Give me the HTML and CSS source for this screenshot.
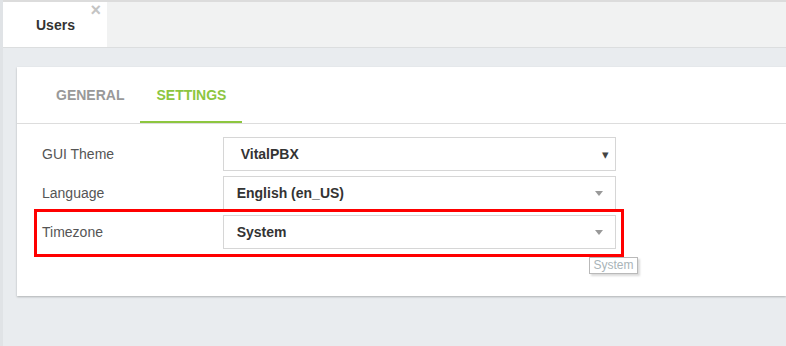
FILE: index.html
```html
<!DOCTYPE html>
<html>
<head>
  <title>Users</title>
  <link rel="stylesheet" href="styles.css">
</head>
<body>
  <div class="page">
    <header class="tab-bar">
      <div class="page-tab">
        <span class="page-tab-title">Users</span>
        <span class="page-tab-close">&times;</span>
      </div>
    </header>

    <main class="content">
      <section class="card">
        <nav class="card-tabs">
          <a class="card-tab">General</a>
          <a class="card-tab active">Settings</a>
        </nav>

        <form class="settings-form">
          <div class="form-row">
            <label class="form-label">GUI Theme</label>
            <div class="select native">
              <span class="select-value">VitalPBX</span>
              <span class="select-caret-dark">&#9662;</span>
            </div>
          </div>
          <div class="form-row">
            <label class="form-label">Language</label>
            <div class="select">
              <span class="select-value">English (en_US)</span>
              <span class="select-caret"></span>
            </div>
          </div>
          <div class="form-row highlighted">
            <label class="form-label">Timezone</label>
            <div class="select">
              <span class="select-value">System</span>
              <span class="select-caret"></span>
            </div>
            <span class="highlight-box"></span>
            <span class="tooltip">System</span>
          </div>
        </form>
      </section>
    </main>
  </div>
</body>
</html>
```

FILE: styles.css
```css
body, h1, h2, p, ul, li {
    margin: 0;
    padding: 0;
  }

  body {
    font-family: Arial, "Liberation Sans", sans-serif;
    background-color: #e9ecef;
    overflow: hidden;
  }

  .page {
    border-left: 3px solid #e0e3e6;
    min-height: 346px;
  }

  /* top tab strip */
  .tab-bar {
    height: 45px;
    background-color: #f1f2f2;
    border-top: 2px solid #dcdcdc;
    border-bottom: 1px solid #dcdedf;
    display: flex;
  }

  .page-tab {
    position: relative;
    width: 104px;
    background-color: #fff;
    display: flex;
    align-items: center;
  }

  .page-tab-title {
    margin-left: 33px;
    font-size: 14px;
    font-weight: bold;
    color: #333;
  }

  .page-tab-close {
    position: absolute;
    top: -2px;
    right: 6px;
    font-size: 18px;
    font-weight: bold;
    color: #c4c4c4;
  }

  .content {
    padding: 19px 0 0 14px;
  }

  .card {
    background-color: #fff;
    height: 229px;
    box-shadow: 0 1px 2px rgba(0, 0, 0, 0.25);
  }

  .card-tabs {
    display: flex;
    padding-left: 23px;
    border-bottom: 1px solid #dddddd;
  }

  .card-tab {
    padding: 0 16px;
    height: 54px;
    line-height: 56px;
    font-size: 14px;
    font-weight: bold;
    text-transform: uppercase;
    color: #999;
    border-bottom: 2px solid transparent;
  }

  .card-tab.active {
    color: #8dc63f;
    border-bottom-color: #8dc63f;
  }

  .settings-form {
    width: 574px;
    padding: 13px 0 0 25px;
    display: flex;
    flex-direction: column;
    gap: 5px;
  }

  .form-row {
    position: relative;
    display: flex;
    align-items: center;
  }

  .form-label {
    width: 181px;
    font-size: 14px;
    color: #555;
  }

  .select {
    width: 367px;
    height: 32px;
    border: 1px solid #d6d6d6;
    display: flex;
    align-items: center;
    justify-content: space-between;
    padding: 0 12px 0 13px;
  }

  .select.native {
    padding-left: 17px;
    padding-right: 6px;
    width: 369px;
  }

  .select-value {
    font-size: 14px;
    font-weight: bold;
    color: #333;
  }

  .select-caret-dark {
    font-size: 13px;
    color: #444;
  }

  .select-caret {
    width: 0;
    height: 0;
    border-left: 4px solid transparent;
    border-right: 4px solid transparent;
    border-top: 5px solid #999;
  }

  .highlight-box {
    position: absolute;
    top: -6px;
    left: -8px;
    right: -8px;
    bottom: -8px;
    border: 3px solid #ff0000;
  }

  .tooltip {
    position: absolute;
    top: 42px;
    left: 547px;
    width: 47px;
    height: 15px;
    border: 1px solid #b9b9b9;
    background-color: #fff;
    box-shadow: 2px 2px 2px rgba(0, 0, 0, 0.15);
    font-size: 12px;
    line-height: 15px;
    text-align: center;
    color: #a9b4b8;
  }
```
